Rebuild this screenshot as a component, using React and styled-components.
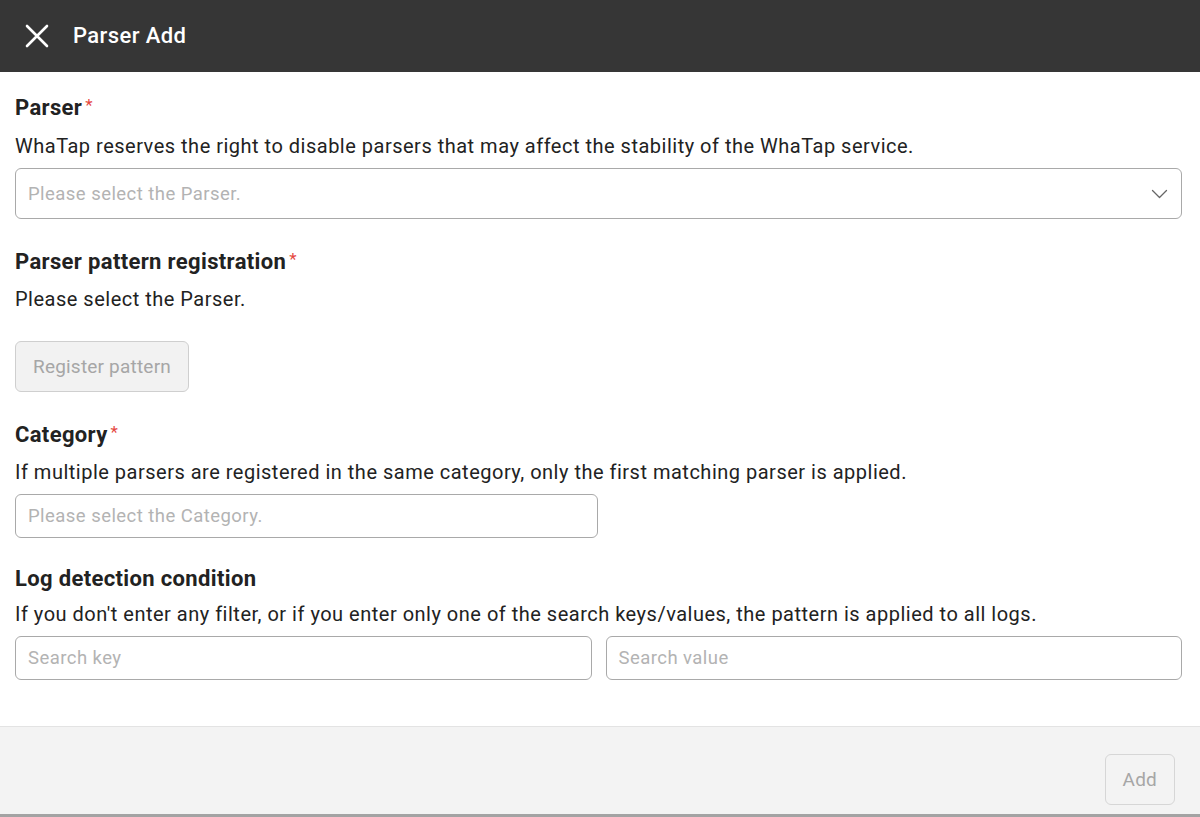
import React from "react";
import styled, { createGlobalStyle } from "styled-components";

const Global = createGlobalStyle`
  html, body { margin: 0; padding: 0; background: #fff; }
  body { font-family: Roboto, "Noto Sans", "Liberation Sans", sans-serif; color: #222; overflow: hidden; }
  * { box-sizing: border-box; }
`;

const Page = styled.div`
  width: 1200px;
  height: 817px;
  display: flex;
  flex-direction: column;
  overflow: hidden;
`;

const Header = styled.header`
  height: 72px;
  flex: none;
  background: #363636;
  display: flex;
  align-items: center;
  padding-left: 25px;
  gap: 24px;
`;

const CloseBtn = styled.button`
  width: 24px;
  height: 24px;
  padding: 0;
  border: 0;
  background: none;
  display: flex;
  cursor: pointer;
`;

const Title = styled.h1`
  margin: 0;
  font-size: 22px;
  letter-spacing: 0.4px;
  font-weight: 500;
  color: #fff;
  line-height: 28px;
`;

const Body = styled.main`
  flex: 1;
  padding: 22px 18px 0 15px;
  display: flex;
  flex-direction: column;
`;

const Section = styled.section`
  margin-top: ${(p) => p.$gap || 0}px;
  display: flex;
  flex-direction: column;
`;

const Label = styled.h2`
  margin: 0;
  font-size: 22px;
  letter-spacing: 0.35px;
  font-weight: 700;
  line-height: 28px;
  display: flex;
  align-items: flex-start;
`;

const Star = styled.span`
  color: #e5483f;
  font-size: 17px;
  font-weight: 400;
  margin-left: 3px;
  line-height: 22px;
`;

const Desc = styled.p`
  margin: ${(p) => p.$top || 11}px 0 0;
  font-size: 20px;
  letter-spacing: 0.5px;
  line-height: 24px;
  color: #222;
`;

const Field = styled.div`
  margin-top: ${(p) => p.$top || 10}px;
  height: ${(p) => p.$h || 44}px;
  width: ${(p) => p.$w || "100%"};
  border: 1px solid #a9a9a9;
  border-radius: 6px;
  display: flex;
  align-items: center;
  padding: 0 ${(p) => p.$pr || 12}px 0 12px;
  justify-content: space-between;
  background: #fff;
`;

const Placeholder = styled.span`
  font-size: 18.5px;
  letter-spacing: 0.45px;
  color: #b3b3b3;
`;

const Row = styled.div`
  display: flex;
  gap: 14px;
  & > * { flex: 1; }
`;

const GhostButton = styled.button`
  margin-top: ${(p) => p.$top || 0}px;
  height: 51px;
  padding: 0 ${(p) => p.$px || 17}px;
  align-self: flex-start;
  border: 1px solid ${(p) => (p.$flat ? "#d6d6d6" : "#cfcfcf")};
  border-radius: 6px;
  background: ${(p) => (p.$flat ? "transparent" : "#f2f2f2")};
  color: #a6a6a6;
  font-family: inherit;
  font-size: 19px;
  letter-spacing: 0.2px;
  cursor: default;
`;

const Footer = styled.footer`
  height: 88px;
  flex: none;
  margin-top: 46px;
  background: #f3f3f3;
  border-top: 1px solid #e3e3e3;
  display: flex;
  justify-content: flex-end;
  align-items: flex-start;
  padding: 27px 25px 0 0;
`;

const BottomEdge = styled.div`
  height: 3px;
  flex: none;
  background: #a3a3a3;
`;

const Chevron = () => (
  <svg width="17" height="10" viewBox="0 0 17 10" fill="none">
    <polyline points="1.5,1.5 8.5,8.5 15.5,1.5" stroke="#666" strokeWidth="1.3" strokeLinejoin="round" strokeLinecap="round" />
  </svg>
);

const XIcon = () => (
  <svg width="24" height="24" viewBox="0 0 24 24" fill="none">
    <path d="M2 2 L22 22 M22 2 L2 22" stroke="#fff" strokeWidth="2.6" strokeLinecap="round" />
  </svg>
);

export default function App() {
  return (
    <Page>
      <Global />
      <Header>
        <CloseBtn aria-label="close"><XIcon /></CloseBtn>
        <Title>Parser Add</Title>
      </Header>
      <Body>
        <Section>
          <Label>Parser<Star>*</Star></Label>
          <Desc $top={12}>WhaTap reserves the right to disable parsers that may affect the stability of the WhaTap service.</Desc>
          <Field $h={51} $top={10} $pr={13}>
            <Placeholder>Please select the Parser.</Placeholder>
            <Chevron />
          </Field>
        </Section>
        <Section $gap={29}>
          <Label>Parser pattern registration<Star>*</Star></Label>
          <Desc>Please select the Parser.</Desc>
          <GhostButton $top={30}>Register pattern</GhostButton>
        </Section>
        <Section $gap={29}>
          <Label>Category<Star>*</Star></Label>
          <Desc>If multiple parsers are registered in the same category, only the first matching parser is applied.</Desc>
          <Field $w="583px">
            <Placeholder>Please select the Category.</Placeholder>
          </Field>
        </Section>
        <Section $gap={27}>
          <Label>Log detection condition</Label>
          <Desc $top={9}>If you don't enter any filter, or if you enter only one of the search keys/values, the pattern is applied to all logs.</Desc>
          <Row>
            <Field><Placeholder>Search key</Placeholder></Field>
            <Field><Placeholder>Search value</Placeholder></Field>
          </Row>
        </Section>
      </Body>
      <Footer>
        <GhostButton $flat $px={17}>Add</GhostButton>
      </Footer>
      <BottomEdge />
    </Page>
  );
}
